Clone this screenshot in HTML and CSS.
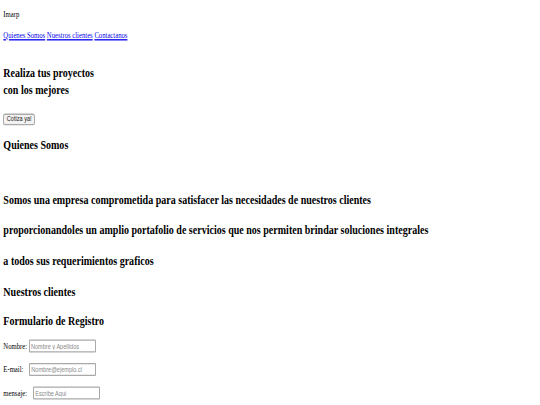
FILE: index.html
```html
<!DOCTYPE html>
<html lang="es">
<head>
<meta charset="utf-8">
<title>Imarp</title>
<link rel="stylesheet" href="styles.css">
</head>
<body>
<div class="page">
  <header class="header">
    <div class="brand">Imarp</div>
    <nav class="nav">
      <a href="#quienes">Quienes Somos</a>
      <a href="#clientes">Nuestros clientes</a>
      <a href="#contacto">Contactanos</a>
    </nav>
  </header>
  <section class="hero">
    <h1 class="hero-title">Realiza tus proyectos<br>con los mejores</h1>
    <div class="cta-wrap"><button class="cta" type="button">Cotiza ya!</button></div>
  </section>
  <section id="quienes">
    <h2 class="section-title">Quienes Somos</h2>
    <h3 class="intro intro-first">Somos una empresa comprometida para satisfacer las necesidades de nuestros clientes</h3>
    <h3 class="intro">proporcionandoles un amplio portafolio de servicios que nos permiten brindar soluciones integrales</h3>
    <h3 class="intro">a todos sus requerimientos graficos</h3>
  </section>
  <section id="clientes">
    <h2 class="section-title clients-title">Nuestros clientes</h2>
  </section>
  <section id="contacto">
    <h2 class="section-title form-title">Formulario de Registro</h2>
    <form class="form">
      <div class="row first-row">
        <label class="label" for="nombre">Nombre:</label>
        <input class="field field-name" id="nombre" type="text" placeholder="Nombre y Apellidos">
      </div>
      <div class="row">
        <label class="label" for="email">E-mail:</label>
        <input class="field field-mail" id="email" type="email" placeholder="Nombre@ejemplo.cl">
      </div>
      <div class="row">
        <label class="label" for="mensaje">mensaje:</label>
        <input class="field field-msg" id="mensaje" type="text" placeholder="Escribe Aqui">
      </div>
    </form>
  </section>
</div>
</body>
</html>
```
FILE: styles.css
```css
html {
  overflow: hidden;
  background: #ffffff;
}

body {
  margin: 0;
  padding: 0;
  min-height: 405px;
}

/* The page is drawn with a tall, narrow type: text is set at its
   horizontal size and the whole page is stretched vertically. */
.page {
  width: 540px;
  padding: 7.28px 3.37px 0;
  box-sizing: border-box;
  transform: scaleY(1.3055);
  transform-origin: 0 0;
  font-family: "Liberation Serif", "Times New Roman", serif;
  color: #000000;
}

.brand {
  font-size: 6.69px;
  line-height: 7.66px;
}

.nav {
  margin-top: 7.66px;
  font-size: 6.69px;
  line-height: 7.66px;
}

.nav a {
  color: #0000ee;
  text-decoration: underline;
}

.hero-title {
  margin: 18.77px 0 0;
  font-size: 10.04px;
  line-height: 13.02px;
  font-weight: bold;
}

.cta-wrap {
  margin-top: 12.26px;
  height: 9.19px;
  display: flex;
}

.cta {
  height: 9.19px;
  margin: 0;
  padding: 0 2.45px;
  font-family: "Liberation Sans", Arial, sans-serif;
  font-size: 5.59px;
  line-height: 7.66px;
  color: #222222;
  background: #f2f2f2;
  border: 1px solid #ababab;
  border-radius: 2px;
}

.section-title,
.intro {
  margin: 8.73px 0 0;
  font-size: 10.04px;
  line-height: 11.49px;
  font-weight: bold;
}

.intro {
  margin-top: 12.33px;
}

.intro-first {
  margin-top: 29.87px;
}

.clients-title {
  margin-top: 12.1px;
}

.form-title {
  margin-top: 11.03px;
}

.form {
  margin: 0;
}

.row {
  display: flex;
  align-items: center;
  height: 9.96px;
  margin-top: 8.04px;
}

.first-row {
  margin-top: 8.58px;
}

.label {
  font-size: 6.69px;
  line-height: 7.66px;
}

.field {
  box-sizing: border-box;
  width: 67px;
  height: 9.58px;
  margin: 0;
  padding: 0 1.15px;
  font-family: "Liberation Sans", Arial, sans-serif;
  font-size: 5.59px;
  border: 1px solid #a9a9a9;
  border-radius: 1px;
  background: #ffffff;
}

.field::placeholder {
  color: #8a8a8a;
}

.field-name {
  margin-left: 1.7px;
}

.field-mail {
  margin-left: 5.75px;
}

.field-msg {
  margin-left: 6px;
}
```
